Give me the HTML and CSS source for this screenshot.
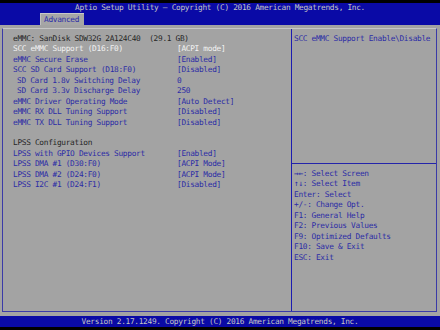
FILE: index.html
```html
<!DOCTYPE html>
<html lang="en">
<head>
  <meta charset="UTF-8">
  <title>Aptio Setup Utility</title>
  <link rel="stylesheet" href="styles.css">
</head>
<body>

  <!-- barra superior -->
  <header class="top">
    <div class="title">Aptio Setup Utility – Copyright (C) 2016 American Megatrends, Inc.</div>
    <nav class="tabs">
      <span class="tab">Advanced</span>
    </nav>
  </header>

  <main class="page">
    <div class="frame">
      <section class="settings">
        <div class="info wide">eMMC: SanDisk SDW32G 2A124C40  (29.1 GB)</div>

        <div class="label selected">SCC eMMC Support (D16:F0)</div>
        <div class="value selected">[ACPI mode]</div>

        <div class="label">eMMC Secure Erase</div>
        <div class="value">[Enabled]</div>

        <div class="label">SCC SD Card Support (D18:F0)</div>
        <div class="value">[Disabled]</div>

        <div class="label sub">SD Card 1.8v Switching Delay</div>
        <div class="value">0</div>

        <div class="label sub">SD Card 3.3v Discharge Delay</div>
        <div class="value">250</div>

        <div class="label">eMMC Driver Operating Mode</div>
        <div class="value">[Auto Detect]</div>

        <div class="label">eMMC RX DLL Tuning Support</div>
        <div class="value">[Disabled]</div>

        <div class="label">eMMC TX DLL Tuning Support</div>
        <div class="value">[Disabled]</div>

        <div class="wide"></div>

        <div class="info wide">LPSS Configuration</div>

        <div class="label">LPSS with GPIO Devices Support</div>
        <div class="value">[Enabled]</div>

        <div class="label">LPSS DMA #1 (D30:F0)</div>
        <div class="value">[ACPI Mode]</div>

        <div class="label">LPSS DMA #2 (D24:F0)</div>
        <div class="value">[ACPI Mode]</div>

        <div class="label">LPSS I2C #1 (D24:F1)</div>
        <div class="value">[Disabled]</div>
      </section>

      <aside class="help">
        <div class="help-text">SCC eMMC Support Enable\Disable</div>
        <ul class="keys">
          <li>→←: Select Screen</li>
          <li>↑↓: Select Item</li>
          <li>Enter: Select</li>
          <li>+/-: Change Opt.</li>
          <li>F1: General Help</li>
          <li>F2: Previous Values</li>
          <li>F9: Optimized Defaults</li>
          <li>F10: Save &amp; Exit</li>
          <li>ESC: Exit</li>
        </ul>
      </aside>
    </div>
  </main>

  <footer class="bottom">Version 2.17.1249. Copyright (C) 2016 American Megatrends, Inc.</footer>

</body>
</html>
```

FILE: styles.css
```css
body {
  margin: 0;
  width: 440px;
  height: 330px;
  background: #000;
  font-family: 'DejaVu Sans Mono', 'Liberation Mono', monospace;
  font-size: 7.8px;
  letter-spacing: -0.3px;
  line-height: 10.45px;
  overflow: hidden;
}

.top {
  margin-top: 3px;
  height: 22px;
  background: #0a0aa6;
  display: flex;
  flex-direction: column;
}

.title {
  height: 10px;
  line-height: 10px;
  text-align: center;
  color: #c4c4c4;
  white-space: pre;
}

.tabs {
  display: flex;
  padding-left: 40px;
  margin-top: auto;
}

.tab {
  width: 44px;
  height: 12px;
  line-height: 12px;
  box-sizing: border-box;
  padding-left: 3px;
  background: #a6a6a6;
  border-top: 1px solid #c8c8c8;
  border-left: 1px solid #c0c0c0;
  color: #2c2ca6;
}

.page {
  height: 291px;
  background: #a3a3a3;
  padding-top: 3px;
  box-sizing: border-box;
}

.frame {
  margin: 0 3px 0 2px;
  height: 284px;
  box-sizing: border-box;
  border: 1px solid #3a3aa8;
  border-top-color: #c6c6c6;
  display: grid;
  grid-template-columns: 289px 1fr;
}

.settings {
  border-right: 1px solid #1c1cb0;
  padding: 5px 0 0 10px;
  display: grid;
  grid-template-columns: 164px 1fr;
  grid-auto-rows: 10.45px;
  align-content: start;
  color: #2c2ca6;
}

.settings div {
  white-space: pre;
}

.wide {
  grid-column: 1 / -1;
}

.info {
  color: #262626;
}

.sub {
  padding-left: 4px;
}

.selected {
  color: #f2f2f2;
}

.help {
  display: flex;
  flex-direction: column;
  color: #2c2ca6;
}

.help-text {
  height: 135px;
  box-sizing: border-box;
  padding: 5px 0 0 2px;
  border-bottom: 1px solid #2424aa;
  white-space: pre;
}

.keys {
  list-style: none;
  margin: 0;
  padding: 5px 0 0 2px;
}

.keys li {
  white-space: pre;
}

.bottom {
  height: 11px;
  line-height: 11px;
  background: #0a0aa6;
  color: #c4c4c4;
  text-align: center;
  white-space: pre;
}
```
